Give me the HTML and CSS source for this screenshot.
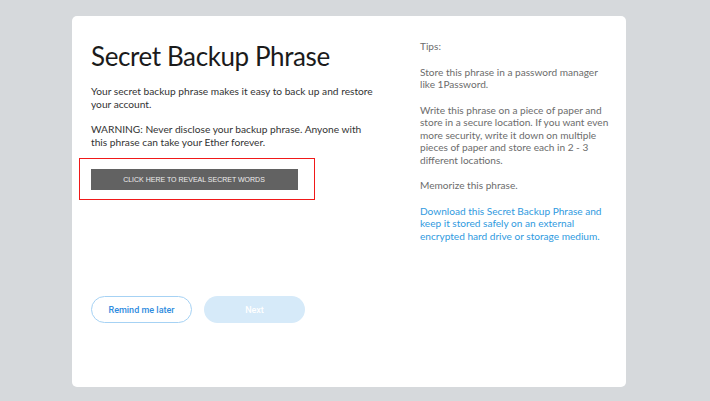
FILE: index.html
```html
<!DOCTYPE html>
<html lang="en">
<head>
    <meta charset="UTF-8">
    <title>Secret Backup Phrase</title>
    <link rel="stylesheet" href="styles.css">
</head>
<body>
    <div class="card">
        <div class="main">
            <h1 class="title">Secret Backup Phrase</h1>
            <p class="text">Your secret backup phrase makes it easy to back up and restore your account.</p>
            <p class="text">WARNING: Never disclose your backup phrase. Anyone with this phrase can take your Ether forever.</p>
            <div class="reveal-box">
                <button class="reveal">CLICK HERE TO REVEAL SECRET WORDS</button>
            </div>
            <div class="actions">
                <button class="btn btn-outline">Remind me later</button>
                <button class="btn btn-disabled">Next</button>
            </div>
        </div>
        <div class="tips">
            <p>Tips:</p>
            <p>Store this phrase in a password manager like 1Password.</p>
            <p>Write this phrase on a piece of paper and store in a secure location. If you want even more security, write it down on multiple pieces of paper and store each in 2 - 3 different locations.</p>
            <p>Memorize this phrase.</p>
            <p class="link">Download this Secret Backup Phrase and keep it stored safely on an external encrypted hard drive or storage medium.</p>
        </div>
    </div>
</body>
</html>
```

FILE: styles.css
```css
body, html {
    margin: 0;
    padding: 0;
    height: 100%;
    background-color: #d6d9dc;
    font-family: 'Lato', 'Open Sans', sans-serif;
    overflow: hidden;
}
.card {
    box-sizing: border-box;
    margin: 16px 0 0 72px;
    width: 554px;
    height: 371px;
    background: #fff;
    border-radius: 5px;
    display: flex;
    padding: 0 0 0 19px;
}
.main {
    width: 310px;
    display: flex;
    flex-direction: column;
}
.title {
    margin: 24px 0 0 0;
    font-size: 26px;
    line-height: 32px;
    font-weight: 400;
    color: #1b1b1b;
    letter-spacing: -0.4px;
}
.text {
    margin: 13px 0 0 0;
    font-size: 10.2px;
    line-height: 12.5px;
    color: #333;
    width: 285px;
}
.reveal-box {
    box-sizing: border-box;
    margin: 10px 0 0 -12px;
    width: 236px;
    height: 42px;
    border: 1.5px solid #f01919;
    display: flex;
    align-items: center;
    padding-left: 10.5px;
}
.reveal {
    width: 207px;
    height: 21px;
    border: none;
    background: #626262;
    color: #eee;
    font-family: 'Liberation Sans', sans-serif;
    font-size: 7px;
    padding: 0;
    cursor: pointer;
}
.actions {
    display: flex;
    gap: 12px;
    margin-top: 96px;
}
.btn {
    width: 101px;
    height: 27px;
    border-radius: 14px;
    font-family: 'Roboto', sans-serif;
    font-size: 9px;
    font-weight: 500;
    cursor: pointer;
}
.btn-outline {
    background: #fff;
    border: 1px solid #a6d2f4;
    color: #2f8ce0;
}
.btn-disabled {
    background: #d6eaf9;
    border: none;
    color: #fff;
}
.tips {
    margin-left: 19px;
    width: 193px;
    padding-top: 24px;
    font-size: 10.1px;
    line-height: 12.5px;
    color: #6c6c6c;
}
.tips p {
    margin: 0 0 13px 0;
}
.tips .link {
    color: #2f9ae0;
}
```
